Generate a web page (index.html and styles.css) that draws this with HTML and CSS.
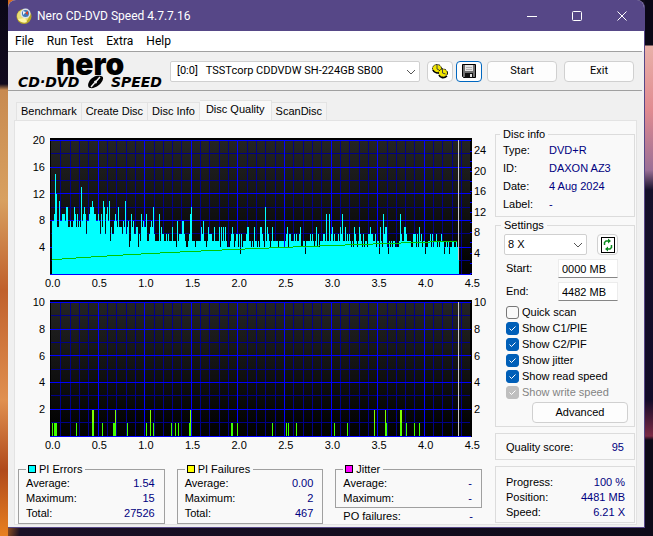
FILE: index.html
```
<!DOCTYPE html>
<html lang="en">

<head>
    <meta charset="UTF-8">
    <meta name="viewport" content="width=device-width, initial-scale=1.0">
    <title>Nero CD-DVD Speed 4.7.7.16</title>
    <link rel="stylesheet" href="styles.css">
</head>

<body>
    <div class="window">
        <header class="titlebar">
            <svg class="app-icon" width="16" height="16" viewBox="0 0 16 16">
                <circle cx="8" cy="8.500" r="7.500" fill="#b8a624"/>
                <circle cx="7" cy="8" r="6" fill="#e9df78"/>
                <path d="M2 11a7 7 0 0 0 9 3l-2-4z" fill="#fff6a8"/>
                <circle cx="9.500" cy="5.500" r="5" fill="#d9e2ee"/>
                <circle cx="9.500" cy="5.500" r="3.500" fill="#3d78b8"/>
                <path d="M9 5l3-2v4z" fill="#d8402a"/>
                <path d="M7 3l3 1-3 3z" fill="#eef4fa"/>
            </svg>
            <h1>Nero CD-DVD Speed 4.7.7.16</h1>
            <div class="caption-buttons">
                <button aria-label="Minimize"><svg width="12" height="12"><path d="M1 6.500h10"/></svg></button>
                <button aria-label="Maximize"><svg width="12" height="12"><rect x="1.500" y="1.500" width="9" height="9" rx="1"/></svg></button>
                <button aria-label="Close"><svg width="12" height="12"><path d="M1.500 1.500l9 9M10.500 1.500l-9 9"/></svg></button>
            </div>
        </header>

        <nav class="menu">
            <a href="#file">File</a>
            <a href="#run">Run Test</a>
            <a href="#extra">Extra</a>
            <a href="#help">Help</a>
        </nav>

        <div class="toolbar">
            <div class="logo">
                <span class="logo-nero">nero</span>
                <span class="logo-speed">
                    <span>CD·DVD</span>
                    <svg width="17" height="14" viewBox="0 0 17 14">
                        <path d="M9 1C13 0 17 1 16 4C15 9 8 14 3 13C0 12 1 8 3 5C5 3 7 1.500 9 1z" fill="#000"/>
                        <path d="M13 2L9 6.500M7.500 8L4 12" stroke="#f0f0f0" stroke-width="1.500"/>
                        <circle cx="8.500" cy="7" r="1.500" fill="#f0f0f0"/>
                    </svg>
                    <span>SPEED</span>
                </span>
            </div>
            <div class="combo drive">
                <select aria-label="Drive">
                    <option>[0:0] &nbsp; TSSTcorp CDDVDW SH-224GB SB00</option>
                </select>
                <svg class="chevron" width="10" height="6"><path d="M1 1l4 4 4-4"/></svg>
            </div>
            <button class="btn icon-btn" aria-label="Options">
                <svg width="16" height="16" viewBox="0 0 16 16">
                    <ellipse cx="5" cy="5.500" rx="4.500" ry="4" fill="#f2e600" stroke="#000" stroke-dasharray="2 1"/>
                    <path d="M1 7c1 3 5 4 8 2" fill="none" stroke="#000" stroke-width="1.500"/>
                    <ellipse cx="11" cy="10" rx="4.500" ry="4" fill="#f2e600" stroke="#000" stroke-dasharray="2 1"/>
                    <path d="M7 12c1 3 5 4 8 1" fill="none" stroke="#000" stroke-width="1.500"/>
                    <path d="M5 1v5l2 1M10.500 5v5l3 1" stroke="#444" fill="none"/>
                </svg>
            </button>
            <button class="btn icon-btn active" aria-label="Save">
                <svg width="14" height="14" viewBox="0 0 14 14">
                    <path d="M0.500 0.500h13v13h-12l-1-1z" fill="#707070" stroke="#000"/>
                    <rect x="3" y="1" width="8" height="6" fill="#e4e4e4"/>
                    <path d="M4 3.500h6M4 5.500h6" stroke="#b0b0b0"/>
                    <rect x="3" y="9" width="8" height="5" fill="#111"/>
                    <rect x="8" y="10" width="2" height="3" fill="#e4e4e4"/>
                </svg>
            </button>
            <button class="btn text-btn">Start</button>
            <button class="btn text-btn">Exit</button>
        </div>

        <div class="tabs" role="tablist">
            <button role="tab">Benchmark</button>
            <button role="tab">Create Disc</button>
            <button role="tab">Disc Info</button>
            <button role="tab" class="selected" aria-selected="true">Disc Quality</button>
            <button role="tab">ScanDisc</button>
        </div>

        <main class="panel">
            <div class="results">
                <div class="chart">
                    <div class="y-axis left">
                        <span>20</span><span>16</span><span>12</span><span>8</span><span>4</span>
                    </div>
                    <svg id="pie" class="plot" viewBox="0 0 422 137" preserveAspectRatio="none"></svg>
                    <div class="y-axis right speed">
                        <span>24</span><span>20</span><span>16</span><span>12</span><span>8</span><span>4</span>
                    </div>
                    <div class="x-axis">
                        <span>0.0</span><span>0.5</span><span>1.0</span><span>1.5</span><span>2.0</span><span>2.5</span><span>3.0</span><span>3.5</span><span>4.0</span><span>4.5</span>
                    </div>
                </div>
                <div class="chart">
                    <div class="y-axis left">
                        <span>10</span><span>8</span><span>6</span><span>4</span><span>2</span>
                    </div>
                    <svg id="pif" class="plot" viewBox="0 0 422 137" preserveAspectRatio="none"></svg>
                    <div class="y-axis right">
                        <span>10</span><span>8</span><span>6</span><span>4</span><span>2</span>
                    </div>
                    <div class="x-axis">
                        <span>0.0</span><span>0.5</span><span>1.0</span><span>1.5</span><span>2.0</span><span>2.5</span><span>3.0</span><span>3.5</span><span>4.0</span><span>4.5</span>
                    </div>
                </div>

                <div class="stats">
                    <fieldset class="stat">
                        <legend><i class="swatch cyan"></i>PI Errors</legend>
                        <dl>
                            <div><dt>Average:</dt><dd>1.54</dd></div>
                            <div><dt>Maximum:</dt><dd>15</dd></div>
                            <div><dt>Total:</dt><dd>27526</dd></div>
                        </dl>
                    </fieldset>
                    <fieldset class="stat">
                        <legend><i class="swatch yellow"></i>PI Failures</legend>
                        <dl>
                            <div><dt>Average:</dt><dd>0.00</dd></div>
                            <div><dt>Maximum:</dt><dd>2</dd></div>
                            <div><dt>Total:</dt><dd>467</dd></div>
                        </dl>
                    </fieldset>
                    <div class="jitter">
                        <fieldset class="stat">
                            <legend><i class="swatch magenta"></i>Jitter</legend>
                            <dl>
                                <div><dt>Average:</dt><dd>-</dd></div>
                                <div><dt>Maximum:</dt><dd>-</dd></div>
                            </dl>
                        </fieldset>
                        <dl class="po">
                            <div><dt>PO failures:</dt><dd>-</dd></div>
                        </dl>
                    </div>
                </div>
            </div>

            <aside class="side">
                <fieldset class="group disc-info">
                    <legend>Disc info</legend>
                    <dl>
                        <div><dt>Type:</dt><dd>DVD+R</dd></div>
                        <div><dt>ID:</dt><dd>DAXON AZ3</dd></div>
                        <div><dt>Date:</dt><dd>4 Aug 2024</dd></div>
                        <div><dt>Label:</dt><dd>-</dd></div>
                    </dl>
                </fieldset>

                <fieldset class="group settings">
                    <legend>Settings</legend>
                    <div class="speed-row">
                        <div class="combo">
                            <select aria-label="Speed"><option>8 X</option></select>
                            <svg class="chevron" width="10" height="6"><path d="M1 1l4 4 4-4"/></svg>
                        </div>
                        <button class="btn refresh" aria-label="Refresh">
                            <svg width="14" height="16" viewBox="0 0 14 16">
                                <rect x="0.500" y="0.500" width="13" height="15" fill="#fff" stroke="#000"/>
                                <path d="M3.500 8V5.500l1.500-1.500h2M10.500 8v2.500l-1.500 1.500H7" fill="none" stroke="#0a8a1e" stroke-width="1.500"/>
                                <path d="M7 1.500l3 2.500-3 2.500zM7 9.500l-3 2.500 3 2.500z" fill="#0a8a1e"/>
                            </svg>
                        </button>
                    </div>
                    <div class="field">
                        <label for="start">Start:</label>
                        <input id="start" type="text" value="0000 MB">
                    </div>
                    <div class="field">
                        <label for="end">End:</label>
                        <input id="end" type="text" value="4482 MB">
                    </div>
                    <div class="checks">
                        <label><input type="checkbox">Quick scan</label>
                        <label><input type="checkbox" checked>Show C1/PIE</label>
                        <label><input type="checkbox" checked>Show C2/PIF</label>
                        <label><input type="checkbox" checked>Show jitter</label>
                        <label><input type="checkbox" checked>Show read speed</label>
                        <label class="disabled"><input type="checkbox" checked disabled>Show write speed</label>
                    </div>
                    <button class="btn advanced">Advanced</button>
                </fieldset>

                <dl class="group score">
                    <div><dt>Quality score:</dt><dd>95</dd></div>
                </dl>

                <dl class="group progress">
                    <div><dt>Progress:</dt><dd>100 %</dd></div>
                    <div><dt>Position:</dt><dd>4481 MB</dd></div>
                    <div><dt>Speed:</dt><dd>6.21 X</dd></div>
                </dl>
            </aside>
        </main>
    </div>
    <script src="charts.js"></script>
</body>

</html>
```
FILE: styles.css
```
* {
    margin: 0;
    padding: 0;
    box-sizing: border-box;
}
body {
    display: flex;
    min-height: 100vh;
    padding: 0 8px;
    font: 11px/15px "Liberation Sans", sans-serif;
    color: #000;
    background:
        linear-gradient(#0a0716 0, #0a0716 45px, #e8b0a8 46px, #e08a90 110px, #9a6f96 170px, #15102a 190px, #120b28 400px, #7a2a44 436px, #0d0a18 440px) right / 8px 100% no-repeat,
        linear-gradient(#0a0716 0, #120b1e 84px, #c88a50 90px, #d8a060 200px, #c0602c 290px, #e09050 400px, #b04a1c 470px, #e88020) left / 8px 100% no-repeat,
        linear-gradient(100deg, #d8701c 0, #c4501e 50px, #e07a1c 90px, #1a1026 112px, #0d0a18);
}
button, select, input {
    font: inherit;
    color: inherit;
}
.window {
    flex: 1;
    display: flex;
    flex-direction: column;
    margin-bottom: 8px;
    background-color: #f0f0f0;
    border-right: 1px solid #564787;
    border-bottom: 1px solid #564787;
    border-radius: 8px 8px 0 0;
    overflow: hidden;
}

/* title bar and menu */
.titlebar {
    display: flex;
    align-items: center;
    height: 31px;
    padding-left: 8px;
    background-color: #564787;
    color: #fff;
}
.titlebar h1 {
    flex: 1;
    margin-left: 5px;
    font: 12px/16px Roboto, sans-serif;
}
.caption-buttons {
    display: flex;
}
.caption-buttons button {
    width: 45px;
    height: 31px;
    background: none;
    border: 0;
}
.caption-buttons svg {
    display: block;
    margin: auto;
    fill: none;
    stroke: #fff;
}
.menu {
    display: flex;
    gap: 13px;
    height: 20px;
    padding-left: 7px;
    background-color: #fff;
    font: 12px/20px Roboto, sans-serif;
}
.menu a {
    color: #000;
    text-decoration: none;
}

/* toolbar */
.toolbar {
    display: flex;
    align-items: center;
    height: 40px;
    margin-right: 2px;
    padding: 0 8px 0 10px;
    border-top: 1px solid #a0a0a0;
    border-bottom: 1px solid #a0a0a0;
    font: 11px/16px Roboto, sans-serif;
}
.logo {
    flex: none;
    width: 144px;
    margin-right: 8px;
}
.logo-nero {
    display: block;
    font: 900 30px/22px Inter, sans-serif;
    text-align: center;
}
.logo-speed {
    display: flex;
    align-items: center;
    justify-content: space-between;
    font: italic bold 14px/15px "DejaVu Sans", sans-serif;
}
.combo {
    position: relative;
    display: flex;
    flex: 1;
}
.combo select {
    width: 100%;
    height: 21px;
    padding-left: 6px;
    appearance: none;
    background-color: #fff;
    border: 1px solid #d0d0d0;
    border-radius: 2px;
}
.chevron {
    position: absolute;
    right: 4px;
    top: 8px;
    fill: none;
    stroke: #555;
    pointer-events: none;
}
.drive {
    margin-right: 7px;
}
.btn {
    background-color: #fdfdfd;
    border: 1px solid #d0d0d0;
    border-radius: 4px;
}
.btn svg {
    display: block;
    margin: auto;
}
.icon-btn {
    width: 26px;
    height: 21px;
    margin-right: 3px;
}
.icon-btn.active {
    margin-right: 5px;
    border-color: #0067c0;
}
.text-btn {
    width: 70px;
    height: 21px;
    line-height: 16px;
}
.text-btn + .text-btn {
    margin-left: 7px;
}

/* tabs */
.tabs {
    display: flex;
    align-items: flex-end;
    height: 29px;
    padding-left: 8px;
}
.tabs button {
    height: 18px;
    padding: 0 4px;
    background-color: #f3f3f3;
    border: 1px solid #e3e3e3;
    border-bottom: 0;
    border-left-width: 0;
}
.tabs button:first-child {
    border-left-width: 1px;
}
.tabs button.selected {
    height: 20px;
    padding: 0 6px 2px;
    background-color: #f9f9f9;
}
.panel {
    flex: 1;
    display: flex;
    gap: 4px;
    margin: 0 7px 2px 6px;
    border: 1px solid #e3e3e3;
    background-color: #f9f9f9;
}

/* charts */
.results {
    flex: 1;
    padding-top: 17px;
}
.chart {
    display: grid;
    grid-template-columns: 35px 1fr 19px;
    height: 162px;
    grid-template-rows: 137px 15px;
}
.plot {
    width: 100%;
    height: 137px;
    shape-rendering: crispEdges;
}
.y-axis {
    display: flex;
    flex-direction: column;
    justify-content: space-between;
    height: 121px;
    margin-top: -5px;
    line-height: 14px;
}
.y-axis.left {
    padding-right: 5px;
    text-align: right;
}
.y-axis.right {
    padding-left: 2px;
}
.y-axis.speed {
    height: 117px;
    margin-top: 5px;
}
.x-axis {
    grid-column: 2;
    display: flex;
    justify-content: space-between;
    margin: 1px -8px 0 -5px;
}

/* statistics */
.stats {
    display: grid;
    grid-template-columns: repeat(3, 1fr);
    gap: 12px;
    padding: 0 9px 0 3px;
}
dl div {
    display: flex;
    justify-content: space-between;
}
dd {
    color: #000080;
}
fieldset {
    min-width: 0;
    border: 1px solid #dcdcdc;
}
.stat {
    padding: 0 9px 1px 7px;
    border-color: #a0a0a0;
}
.stat legend {
    padding: 0 3px 0 2px;
    line-height: 14px;
}
.swatch {
    display: inline-block;
    width: 8px;
    height: 8px;
    margin-right: 3px;
    border: 1px solid #000;
}
.cyan { background-color: #00ffff; }
.yellow { background-color: #ffff00; }
.magenta { background-color: #ff00ff; }
.po {
    padding: 1px 9px 0 8px;
}

/* side column */
.side {
    width: 141px;
    padding: 6px 1px 0 0;
}
.group {
    margin-bottom: 6px;
    border: 1px solid #dcdcdc;
}
.group legend {
    margin-left: -3px;
    padding: 0 3px;
    line-height: 14px;
}
.disc-info {
    height: 90px;
    margin-bottom: 1px;
    padding: 0 7px;
}
.disc-info div {
    justify-content: flex-start;
    line-height: 18px;
}
.disc-info dt {
    width: 46px;
}
.settings {
    padding: 2px 6px 3px 8px;
}
.speed-row {
    display: flex;
    gap: 10px;
    margin-right: 10px;
}
.speed-row select {
    padding-left: 3px;
}
.refresh {
    width: 21px;
    height: 21px;
}
.field {
    display: flex;
    align-items: center;
    justify-content: space-between;
    margin: 4px 10px 0 2px;
}
.field input {
    width: 60px;
    height: 19px;
    padding: 0 3px;
    background-color: #fff;
    border: 1px solid #ececec;
    border-bottom-color: #868686;
}
.checks {
    margin: 3px 0 2px 2px;
}
.checks label {
    display: flex;
    align-items: center;
    gap: 3px;
    height: 16px;
}
.checks input {
    width: 13px;
    height: 13px;
    appearance: none;
    background-color: #f9f9f9;
    border: 1px solid #777;
    border-radius: 3px;
}
.checks input:checked {
    border-color: #005fb8;
    background: #005fb8 url("data:image/svg+xml,%3Csvg xmlns='http://www.w3.org/2000/svg' width='11' height='11'%3E%3Cpath d='M2.500 5.500l2 2 4-4' fill='none' stroke='white'/%3E%3C/svg%3E");
}
.checks input:disabled {
    border-color: #bfbfbf;
    background-color: #bfbfbf;
}
.disabled {
    color: #838383;
}
.advanced {
    display: block;
    width: 96px;
    height: 21px;
    margin-left: auto;
}
.score {
    padding: 6px 10px 4px;
}
.progress {
    margin-bottom: 0;
    padding: 8px 9px 2px 10px;
}
```
FILE: charts.js
```
// PI errors, one hex digit per column
var pie = [
    '889fc77b88', '9998aa7787', '78a97978' + '7d', '89a96889aa', 'ba99889869', '7ba69a8b57',
    '668987a777', '687b678459', '7866774659', '7877955678', '7a65555957', '6655656555',
    '7555485666', '886544569a', '5554555557', '6855457666', '5575555747', '5757544456',
    '7645664636', '4555677554', '54755454', '77654a5765', '4575555545', '5555456746',
    '6555656556', '7445535555', '6565457464', '5556659559', '5675655565', '7695575656',
    '5454765457', '6546455466', '7665564553', '7549677435', '4545544445', '9655776555',
    '5446664647', '5645534455', '6464556454', '5655345453', '445544543'
].join('')

// PI failures: x, value, width
var pif = [
    [2, 1, 1], [4, 1, 3], [26, 1, 1], [42, 2, 2], [52, 1, 1], [63, 1, 3], [65, 2, 1], [77, 1, 1],
    [96, 1, 1], [100, 2, 1], [103, 1, 1], [121, 1, 1], [125, 1, 1], [128, 1, 1], [139, 1, 1], [140, 2, 1],
    [181, 1, 2], [187, 1, 1], [222, 1, 1], [236, 1, 1], [238, 1, 1], [246, 1, 1], [284, 1, 1], [297, 1, 1],
    [324, 2, 1], [335, 2, 1], [336, 1, 1], [350, 2, 2], [356, 1, 1], [364, 1, 1], [369, 1, 1]
]

function rect(x, y, w, h, fill) {
    return '<rect x="' + x + '" y="' + y + '" width="' + w + '" height="' + h + '" fill="' + fill + '"/>'
}

function grid(id) {
    var s = '<defs><linearGradient id="' + id + '-bg" x2="0" y2="1">' +
        '<stop stop-color="#242424"/><stop offset="1" stop-color="#000"/></linearGradient></defs>'
    s += rect(0, 0, 422, 137, '#000') + rect(1, 2, 419, 134, 'url(#' + id + '-bg)')
    for (var i = 1; i < 45; i++) {
        if (i % 5) s += rect(Math.round(1 + i * 9.32), 2, 1, 134, '#000088')
    }
    for (i = 1; i < 10; i += 2) s += rect(1, Math.round(2 + i * 13.35), 419, 1, '#000088')
    for (i = 5; i < 45; i += 5) s += rect(Math.round(1 + i * 9.32), 2, 1, 134, '#0000ff')
    for (i = 0; i <= 10; i += 2) s += rect(0, Math.round(2 + i * 13.35), 421, 1, '#0000ff')
    return s
}

var s = grid('pie')
for (var k = 0; k < 13; k++) s += rect(420, Math.round(135 - k * 10.2), 2, 1, '#0000ff')
var d = 'M2 136'
for (k = 0; k < pie.length; k++) {
    d += 'V' + Math.round(136 - parseInt(pie[k], 16) * 6.68) + 'h1'
}
s += '<path d="' + d + 'V136z" fill="#00ffff"/>'
s += rect(408, 2, 1, 120, '#c8c8c8')

// read speed rises in one pixel steps
var steps = [2, 12, 26, 41, 57, 73, 91, 110, 130, 151, 172, 195, 219, 243, 269, 295, 323, 351, 380, 407]
for (k = 0; k < steps.length - 1; k++) {
    s += rect(steps[k], 121 - k, steps[k + 1] - steps[k], 1, '#00c800')
}
document.getElementById('pie').innerHTML = s

s = grid('pif')
pif.forEach(function (b) {
    s += rect(b[0], 136 - b[1] * 13, b[2], b[1] * 13, b[1] == 2 ? '#80ff00' : '#40ff00')
    if (b[1] == 2) s += rect(b[0], 123, b[2], 13, '#55ff00')
})
s += rect(408, 2, 1, 134, '#c8c8c8')
document.getElementById('pif').innerHTML = s
```
